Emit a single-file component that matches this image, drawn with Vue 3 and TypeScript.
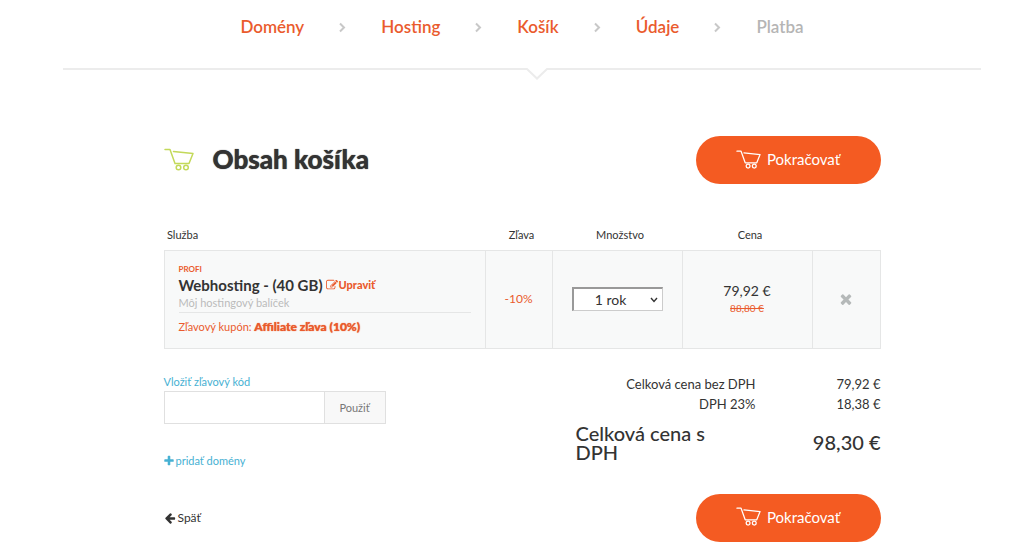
<script setup lang="ts">
import { ref } from 'vue'

interface Step {
  label: string
  done: boolean
}

const steps: Step[] = [
  { label: 'Domény', done: true },
  { label: 'Hosting', done: true },
  { label: 'Košík', done: true },
  { label: 'Údaje', done: true },
  { label: 'Platba', done: false },
]

const period = ref('1 rok')
const coupon = ref('')

const cartPath = 'M1 1.5H6L11 15.5H25L29 5.5L9.5 3.5'
</script>

<template>
  <div class="page">
    <header class="top">
      <nav class="steps" aria-label="Kroky objednávky">
        <template v-for="(step, i) in steps" :key="step.label">
          <svg v-if="i > 0" class="chevron" viewBox="0 0 7 12" aria-hidden="true">
            <path d="M1 2.5L5 6.5L1 10.5" />
          </svg>
          <a v-if="step.done" class="step" href="#">{{ step.label }}</a>
          <span v-else class="step pending">{{ step.label }}</span>
        </template>
      </nav>
      <svg class="notch" viewBox="0 0 22 12" aria-hidden="true">
        <path class="notch-fill" d="M0 0H22V1L11 11L0 1Z" />
        <path class="notch-line" d="M0 1H1L11 10.5L21 1H22" />
      </svg>
    </header>

    <main class="content">
      <div class="bar">
        <h1 class="title">
          <svg class="cart" viewBox="0 0 30 23" aria-hidden="true">
            <path :d="cartPath" />
            <circle cx="14.5" cy="19.5" r="2.3" />
            <circle cx="22" cy="19.5" r="2.3" />
          </svg>
          Obsah košíka
        </h1>
        <button class="go" type="button">
          <svg class="cart small" viewBox="0 0 30 23" aria-hidden="true">
            <path :d="cartPath" />
            <circle cx="14.5" cy="19.5" r="2.3" />
            <circle cx="22" cy="19.5" r="2.3" />
          </svg>
          Pokračovať
        </button>
      </div>

      <table class="items">
        <colgroup>
          <col />
          <col class="c-discount" />
          <col class="c-amount" />
          <col class="c-price" />
          <col class="c-remove" />
        </colgroup>
        <thead>
          <tr>
            <th class="first" scope="col">Služba</th>
            <th scope="col">Zľava</th>
            <th scope="col">Množstvo</th>
            <th scope="col">Cena</th>
            <td class="blank"></td>
          </tr>
        </thead>
        <tbody>
          <tr>
            <td class="service">
              <div class="tag">PROFI</div>
              <div class="name">
                <strong>Webhosting - (40 GB)</strong>
                <a class="edit" href="#">
                  <svg viewBox="0 0 1792 1792" aria-hidden="true">
                    <path d="M888 1184l116-116-152-152-116 116v56h96v96h56zm440-720q-16-16-33 1l-350 350q-17 17-1 33t33-1l350-350q17-17 1-33zm80 594v190q0 119-84.5 203.5t-203.5 84.5h-832q-119 0-203.5-84.5t-84.5-203.5v-832q0-119 84.5-203.5t203.5-84.5h832q63 0 117 25 15 7 18 23 3 17-9 29l-49 49q-14 14-32 8-23-6-45-6h-832q-66 0-113 47t-47 113v832q0 66 47 113t113 47h832q66 0 113-47t47-113v-126q0-13 9-22l64-64q15-15 35-7t20 29zm-96-738l288 288-672 672h-288v-288zm444 132l-92 92-288-288 92-92q28-28 68-28t68 28l152 152q28 28 28 68t-28 68z" />
                  </svg>
                  Upraviť
                </a>
              </div>
              <div class="note">Môj hostingový balíček</div>
              <div class="coupon-line">Zľavový kupón: <b>Affiliate zľava (10%)</b></div>
            </td>
            <td class="discount">-10%</td>
            <td>
              <select v-model="period" class="period" aria-label="Množstvo">
                <option>1 rok</option>
                <option>2 roky</option>
              </select>
            </td>
            <td>
              <div class="price">79,92 €</div>
              <s class="old">88,80 €</s>
            </td>
            <td>
              <button class="remove" type="button" aria-label="Odstrániť">
                <svg viewBox="0 0 1792 1792" aria-hidden="true">
                  <path d="M1490 1322q0 40-28 68l-136 136q-28 28-68 28t-68-28l-294-294-294 294q-28 28-68 28t-68-28l-136-136q-28-28-28-68t28-68l294-294-294-294q-28-28-28-68t28-68l136-136q28-28 68-28t68 28l294 294 294-294q28-28 68-28t68 28l136 136q28 28 28 68t-28 68l-294 294 294 294q28 28 28 68z" />
                </svg>
              </button>
            </td>
          </tr>
        </tbody>
      </table>

      <div class="summary">
        <form class="extras" @submit.prevent>
          <label class="code-label" for="code">Vložiť zľavový kód</label>
          <div class="code">
            <input id="code" v-model="coupon" type="text" />
            <button type="submit">Použiť</button>
          </div>
          <a class="add" href="#">
            <svg viewBox="0 0 1792 1792" aria-hidden="true">
              <path d="M1600 736v192q0 40-28 68t-68 28h-416v416q0 40-28 68t-68 28h-192q-40 0-68-28t-28-68v-416h-416q-40 0-68-28t-28-68v-192q0-40 28-68t68-28h416v-416q0-40 28-68t68-28h192q40 0 68 28t28 68v416h416q40 0 68 28t28 68z" />
            </svg>
            pridať domény
          </a>
        </form>

        <table class="totals">
          <tbody>
            <tr>
              <th scope="row">Celková cena bez DPH</th>
              <td>79,92 €</td>
            </tr>
            <tr>
              <th scope="row">DPH 23%</th>
              <td>18,38 €</td>
            </tr>
            <tr class="grand">
              <th scope="row">Celková cena s DPH</th>
              <td>98,30 €</td>
            </tr>
          </tbody>
        </table>
      </div>

      <div class="bar bottom">
        <a class="back" href="#">
          <svg viewBox="0 0 1792 1792" aria-hidden="true">
            <path d="M1664 896v128q0 53-32.5 90.5t-84.5 37.5h-704l293 294q38 36 38 90t-38 90l-75 76q-37 37-90 37-52 0-91-37l-651-652q-37-37-37-90 0-52 37-91l651-650q38-38 91-38 52 0 90 38l75 74q38 38 38 91t-38 91l-293 293h704q52 0 84.5 37.5t32.5 90.5z" />
          </svg>
          Späť
        </a>
        <button class="go" type="button">
          <svg class="cart small" viewBox="0 0 30 23" aria-hidden="true">
            <path :d="cartPath" />
            <circle cx="14.5" cy="19.5" r="2.3" />
            <circle cx="22" cy="19.5" r="2.3" />
          </svg>
          Pokračovať
        </button>
      </div>
    </main>
  </div>
</template>

<style>
body {
  background: #fff;
}
</style>

<style scoped>
.page {
  padding-left: 20px;
  color: #333;
  font-family: Lato, "Open Sans", sans-serif;
  font-size: 12px;
  line-height: 16px;
}

.page * {
  box-sizing: border-box;
}

a {
  text-decoration: none;
}

button,
input,
select {
  font-family: inherit;
}

.top {
  position: relative;
  max-width: 918px;
  margin: 0 auto;
  padding: 15px 0 29px;
  border-bottom: 2px solid #ececec;
}

.steps {
  display: flex;
  justify-content: center;
  align-items: center;
  gap: 35px;
  font-size: 17px;
  font-weight: 600;
  line-height: 24px;
}

.step {
  color: #ea5b2d;
}

.step.pending {
  color: #b5b5b5;
}

.chevron {
  width: 7px;
  height: 12px;
  fill: none;
  stroke: #c8c8c8;
  stroke-width: 2;
}

.notch {
  position: absolute;
  top: 68px;
  left: 50%;
  width: 22px;
  height: 12px;
  margin-left: 4px;
}

.notch-fill {
  fill: #fff;
}

.notch-line {
  fill: none;
  stroke: #ececec;
  stroke-width: 2;
}

.content {
  max-width: 717px;
  margin: 0 auto;
  padding-top: 66px;
}

.bar {
  display: flex;
  justify-content: space-between;
  align-items: center;
}

.title {
  display: flex;
  align-items: center;
  gap: 19px;
  margin: 0;
  padding-bottom: 2px;
  font-size: 26px;
  font-weight: 900;
  line-height: 32px;
  text-shadow: 0 0 1px currentColor;
}

.cart {
  width: 30px;
  height: 23px;
  fill: none;
  stroke: #c3d95a;
  stroke-width: 1.5;
  stroke-linejoin: round;
  stroke-linecap: round;
}

.cart.small {
  width: 25px;
  height: 19px;
  stroke: #fff;
}

.go {
  display: flex;
  justify-content: center;
  align-items: center;
  gap: 6px;
  width: 185px;
  height: 48px;
  padding: 0 0 2px;
  border: 0;
  border-radius: 24px;
  background: #f45b22;
  color: #fff;
  font-size: 15px;
  font-weight: 400;
}

.items {
  width: 100%;
  margin-top: 36px;
  border-collapse: collapse;
  table-layout: fixed;
  text-align: center;
}

.c-discount {
  width: 67px;
}

.c-amount,
.c-price {
  width: 130px;
}

.c-remove {
  width: 68px;
}

.items th {
  height: 30px;
  padding: 0 0 0 6px;
  font-size: 11px;
  font-weight: 400;
}

.items th.first {
  padding-left: 3px;
  text-align: left;
}

.items tbody td {
  padding: 0;
  border: 1px solid #e5e6e6;
  background: #f8f9f9;
}

.items td.service {
  padding: 12px 14px 13px;
  text-align: left;
}

.tag {
  color: #ea5b2d;
  font-size: 8px;
  font-weight: 700;
  line-height: 12px;
}

.name {
  display: flex;
  align-items: center;
  gap: 3px;
  line-height: 20px;
}

.name strong {
  font-size: 15px;
}

.edit {
  display: flex;
  align-items: center;
  gap: 1px;
  color: #ea5b2d;
  font-size: 11px;
  font-weight: 900;
}

.edit svg,
.remove svg,
.add svg,
.back svg {
  display: block;
  width: 12px;
  height: 12px;
  fill: currentColor;
}

.note {
  padding-bottom: 1px;
  border-bottom: 1px solid #e5e6e6;
  color: #bbb;
  font-size: 11px;
}

.coupon-line {
  padding-top: 6px;
  color: #ea5b2d;
  font-size: 11px;
}

.coupon-line b {
  font-size: 12px;
  font-weight: 900;
  text-shadow: 0 0 1px currentColor;
}

.discount {
  color: #ea5b2d;
}

.period {
  appearance: none;
  display: block;
  width: 91px;
  height: 24px;
  margin: 0 auto;
  padding: 0 20px 0 6px;
  border: 1px solid #ccc;
  border-top: 2px solid #999;
  border-left: 2px solid #999;
  border-radius: 0;
  background: #fff url("data:image/svg+xml,%3Csvg xmlns='http://www.w3.org/2000/svg' viewBox='0 0 8 6'%3E%3Cpath d='M1 1l3 3.5L7 1' fill='none' stroke='%23333' stroke-width='1.4'/%3E%3C/svg%3E") no-repeat right 4px center / 8px 6px;
  color: #333;
  font-size: 14px;
  text-align: center;
  text-align-last: center;
}

.price {
  font-size: 14px;
  line-height: 18px;
}

.old {
  display: block;
  color: #ea5b2d;
  font-size: 10px;
}

.remove {
  display: block;
  margin: 0 auto;
  padding: 0;
  border: 0;
  background: none;
  color: #b5b9b9;
}

.remove svg {
  width: 16px;
  height: 16px;
}

.summary {
  display: flex;
  justify-content: space-between;
  align-items: flex-start;
  margin-top: 25px;
}

.extras {
  width: 222px;
  color: #47b1d3;
  font-size: 11px;
}

.code-label {
  display: block;
}

.code {
  display: flex;
  height: 33px;
  margin: 1px 0 29px;
  border: 1px solid #e0e0e0;
}

.code input {
  flex: 1;
  min-width: 0;
  border: 0;
  background: #fff;
}

.code button {
  width: 61px;
  padding: 0;
  border: 0;
  border-left: 1px solid #e0e0e0;
  background: #f8f8f8;
  color: #777;
  font-size: 11px;
}

.add {
  display: flex;
  align-items: center;
  gap: 1px;
  color: #47b1d3;
  font-size: 11px;
}

.add svg {
  margin-left: -1px;
}

.totals {
  width: 305px;
  border-collapse: collapse;
  font-size: 13px;
  line-height: 20px;
}

.totals th,
.totals td {
  padding: 0;
  font-weight: 400;
  text-align: right;
}

.totals th {
  width: 180px;
}

.totals .grand th,
.totals .grand td {
  padding-top: 10px;
  font-size: 20px;
  font-weight: 500;
  line-height: 19px;
}

.totals .grand th {
  padding-right: 30px;
  text-align: left;
}

.bottom {
  margin-top: 25px;
}

.back {
  display: flex;
  align-items: center;
  gap: 2px;
  color: #333;
}
</style>
